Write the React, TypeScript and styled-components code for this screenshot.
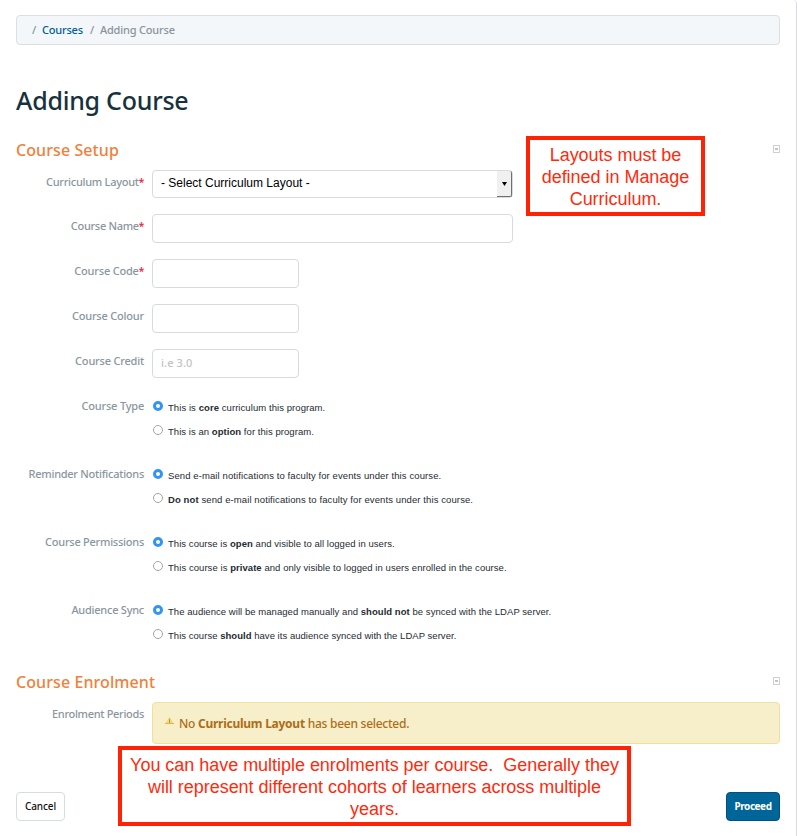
import React from "react";
import styled, { createGlobalStyle } from "styled-components";

const humanist = `"Noto Sans", "Open Sans", sans-serif`;
const grotesque = `"Liberation Sans", Arial, sans-serif`;

const GlobalStyle = createGlobalStyle`
  *, *::before, *::after { box-sizing: border-box; }
  body { margin: 0; background: #fff; overflow: hidden; }
`;

const Page = styled.main`
  position: relative;
  width: 797px;
  height: 836px;
  padding: 15px 16px 0;
  border-right: 1px solid #d9dcde;
  border-top-right-radius: 4px;
  background: #fff;
  font-family: ${humanist};
  color: #17323c;
`;

const Breadcrumb = styled.nav`
  display: flex;
  align-items: center;
  height: 30px;
  padding: 0 0 2px 15px;
  border: 1px solid #d9dfe2;
  border-radius: 4px;
  background: #f3f7fa;
  font-size: 11px;
  font-weight: 500;
  color: #8a949b;
`;

const Crumb = styled.span`
  letter-spacing: -0.18px;
`;

const CrumbLink = styled.a`
  color: #005f96;
  letter-spacing: -0.2px;
`;

const Slash = styled.span`
  width: 4px;
  margin: 0 6px 0 7px;
  &:first-child { margin-left: 0; }
`;

const Title = styled.h1`
  height: 89px;
  margin: 0;
  padding-top: 37px;
  font-size: 25px;
  line-height: 36px;
  font-weight: 500;
  letter-spacing: -0.25px;
`;

const SectionHeader = styled.header`
  display: flex;
  align-items: flex-start;
  justify-content: space-between;
  height: 36px;
`;

const SectionTitle = styled.h2`
  margin: 0;
  font-size: 16px;
  line-height: 32px;
  font-weight: 500;
  letter-spacing: 0.08px;
  color: #f0803a;
`;

const CollapseIcon = styled.svg`
  margin-top: 11px;
`;

const Row = styled.div<{ $height: number }>`
  display: grid;
  grid-template-columns: 128px 1fr;
  column-gap: 8px;
  align-items: start;
  height: ${(p) => p.$height}px;
`;

const Label = styled.label<{ $spacing?: number }>`
  padding-top: 2px;
  font-size: 11px;
  line-height: 20px;
  font-weight: 500;
  text-align: right;
  white-space: nowrap;
  letter-spacing: ${(p) => p.$spacing ?? -0.27}px;
  color: #8a969e;
`;

const Required = styled.span`
  font-size: 10px;
  font-weight: 600;
  color: #f2223c;
`;

const TextInput = styled.input<{ $width: number }>`
  width: ${(p) => p.$width}px;
  height: 29px;
  padding: 0 8px 2px;
  border: 1px solid #d5dbdf;
  border-radius: 4px;
  background: #fff;
  font: 500 11px ${humanist};
  letter-spacing: 0.1px;
  outline: none;
  &::placeholder { color: #bfc4c8; opacity: 1; }
`;

const SelectBox = styled.div`
  display: flex;
  justify-content: space-between;
  width: 361px;
  height: 28px;
  padding-left: 8px;
  border: 1px solid #d5dbdf;
  border-radius: 4px;
  font-family: ${grotesque};
  font-size: 12px;
  line-height: 24px;
  color: #000;
`;

const SelectArrow = styled.span`
  display: flex;
  align-items: center;
  justify-content: center;
  width: 15px;
  height: 26px;
  border-right: 1px solid #6f6f6f;
  border-bottom: 1px solid #6f6f6f;
  border-radius: 0 2px 2px 0;
  background: #f0f0f0;
`;

const RadioGroup = styled.div`
  display: grid;
  grid-auto-rows: 24px;
`;

const RadioOption = styled.div`
  display: flex;
  align-items: center;
  gap: 5px;
  padding-left: 1px;
  height: 24px;
`;

const RadioDot = styled.span<{ $checked: boolean }>`
  flex: none;
  width: 10px;
  height: 10px;
  border: ${(p) => (p.$checked ? "3px solid #3294f4" : "1px solid #a6a6a6")};
  border-radius: 50%;
  background: #fff;
`;

const RadioText = styled.span<{ $spacing: number }>`
  padding-top: 3px;
  font-family: ${grotesque};
  font-size: 9.5px;
  line-height: 14px;
  white-space: nowrap;
  letter-spacing: ${(p) => p.$spacing}px;
  color: #252b30;
`;

const Alert = styled.div`
  display: flex;
  align-items: center;
  height: 42px;
  padding-left: 11px;
  border: 1px solid #efe19c;
  border-radius: 4px;
  background: #f7efca;
  font-size: 12px;
  font-weight: 500;
  letter-spacing: -0.26px;
  color: #ad6d17;
`;

const WarningIcon = styled.svg`
  flex: none;
  margin: -4px 5px 0 1px;
`;

const Actions = styled.footer`
  display: flex;
  justify-content: space-between;
  margin-top: 48px;
`;

const Button = styled.button<{ $primary?: boolean }>`
  width: ${(p) => (p.$primary ? 54 : 49)}px;
  height: 29px;
  padding: 0 0 1px;
  border: 1px solid ${(p) => (p.$primary ? "#00527d" : "#d5dde1")};
  border-radius: 4px;
  background: ${(p) => (p.$primary ? "#006699" : "#fff")};
  color: ${(p) => (p.$primary ? "#fff" : "#111")};
  font: ${(p) => (p.$primary ? 700 : 500)} 10px ${humanist};
  letter-spacing: ${(p) => (p.$primary ? -0.45 : -0.1)}px;
  white-space: nowrap;
`;

const Callout = styled.aside<{ $x: number; $y: number; $w: number; $h: number }>`
  position: absolute;
  left: ${(p) => p.$x}px;
  top: ${(p) => p.$y}px;
  width: ${(p) => p.$w}px;
  height: ${(p) => p.$h}px;
  padding-top: 4px;
  border: 4px solid #ff2205;
  background: #fff;
  font-family: ${grotesque};
  font-size: 18px;
  line-height: 22px;
  text-align: center;
  color: #ff2a0c;
`;

const CalloutLine = styled.div`
  white-space: pre;
  letter-spacing: -0.03px;
`;

function Collapse() {
  return (
    <CollapseIcon width="8" height="8" viewBox="0 0 8 8">
      <rect x="1.5" y="0.5" width="6" height="7" fill="#fff" stroke="#cfd0d1" />
      <path d="M3 4H6" stroke="#aaa" strokeWidth="1.4" />
    </CollapseIcon>
  );
}

function Warning() {
  return (
    <WarningIcon width="9" height="8" viewBox="0 0 9 8">
      <path d="M4.5 .4 7.6 6H1.4Z" fill="#f8e08c" stroke="#edcb66" strokeWidth=".7" />
      <path d="M4.5 2.2V5.8" stroke="#b98a1e" strokeWidth="1" />
      <path d="M0 6.5H9" stroke="#e5b04a" strokeWidth="1" />
    </WarningIcon>
  );
}

type Option = { text: React.ReactNode; spacing: number };

const radioFields: { label: string; spacing: number; options: Option[] }[] = [
  {
    label: "Course Type",
    spacing: -0.2,
    options: [
      { text: <>This is <b>core</b> curriculum this program.</>, spacing: 0.07 },
      { text: <>This is an <b>option</b> for this program.</>, spacing: 0.05 },
    ],
  },
  {
    label: "Reminder Notifications",
    spacing: -0.27,
    options: [
      { text: <>Send e-mail notifications to faculty for events under this course.</>, spacing: 0.1 },
      { text: <><b>Do not</b> send e-mail notifications to faculty for events under this course.</>, spacing: 0.1 },
    ],
  },
  {
    label: "Course Permissions",
    spacing: -0.25,
    options: [
      { text: <>This course is <b>open</b> and visible to all logged in users.</>, spacing: 0.05 },
      { text: <>This course is <b>private</b> and only visible to logged in users enrolled in the course.</>, spacing: 0.06 },
    ],
  },
  {
    label: "Audience Sync",
    spacing: -0.25,
    options: [
      { text: <>The audience will be managed manually and <b>should not</b> be synced with the LDAP server.</>, spacing: 0.05 },
      { text: <>This course <b>should</b> have its audience synced with the LDAP server.</>, spacing: 0.035 },
    ],
  },
];

export default function App() {
  return (
    <>
      <GlobalStyle />
      <Page>
        <Breadcrumb>
          <Slash>/</Slash>
          <CrumbLink>Courses</CrumbLink>
          <Slash>/</Slash>
          <Crumb>Adding Course</Crumb>
        </Breadcrumb>
        <Title>Adding Course</Title>

        <SectionHeader>
          <SectionTitle>Course Setup</SectionTitle>
          <Collapse />
        </SectionHeader>
        <Row $height={44}>
          <Label>Curriculum Layout<Required>*</Required></Label>
          <SelectBox>
            - Select Curriculum Layout -
            <SelectArrow>
              <svg width="5" height="4" viewBox="0 0 5 4"><path d="M0 0H5L2.5 4Z" fill="#000" /></svg>
            </SelectArrow>
          </SelectBox>
        </Row>
        <Row $height={45}>
          <Label $spacing={-0.3}>Course Name<Required>*</Required></Label>
          <TextInput $width={361} />
        </Row>
        <Row $height={45}>
          <Label $spacing={-0.2}>Course Code<Required>*</Required></Label>
          <TextInput $width={147} />
        </Row>
        <Row $height={45}>
          <Label $spacing={-0.2}>Course Colour</Label>
          <TextInput $width={147} />
        </Row>
        <Row $height={45}>
          <Label $spacing={-0.2}>Course Credit</Label>
          <TextInput $width={147} placeholder="i.e 3.0" />
        </Row>
        {radioFields.map((field) => (
          <Row $height={68} key={field.label}>
            <Label $spacing={field.spacing}>{field.label}</Label>
            <RadioGroup>
              {field.options.map((option, i) => (
                <RadioOption key={i}>
                  <RadioDot $checked={i === 0} />
                  <RadioText $spacing={option.spacing}>{option.text}</RadioText>
                </RadioOption>
              ))}
            </RadioGroup>
          </Row>
        ))}

        <SectionHeader>
          <SectionTitle>Course Enrolment</SectionTitle>
          <Collapse />
        </SectionHeader>
        <Row $height={42}>
          <Label $spacing={-0.32}>Enrolment Periods</Label>
          <Alert>
            <Warning />
            <span>No <b>Curriculum Layout</b> has been selected.</span>
          </Alert>
        </Row>
        <Actions>
          <Button>Cancel</Button>
          <Button $primary>Proceed</Button>
        </Actions>

        <Callout $x={526} $y={136} $w={179} $h={80}>
          <CalloutLine>Layouts must be</CalloutLine>
          <CalloutLine>defined in Manage</CalloutLine>
          <CalloutLine>Curriculum.</CalloutLine>
        </Callout>
        <Callout $x={118} $y={746} $w={513} $h={80}>
          <CalloutLine>{"You can have multiple enrolments per course.  Generally they"}</CalloutLine>
          <CalloutLine>will represent different cohorts of learners across multiple</CalloutLine>
          <CalloutLine>years.</CalloutLine>
        </Callout>
      </Page>
    </>
  );
}
